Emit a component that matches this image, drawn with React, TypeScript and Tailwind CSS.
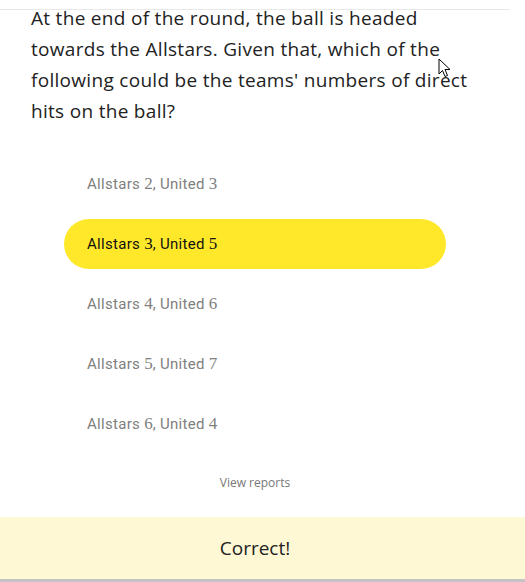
import * as React from "react"

const options = [
  { a: "2", u: "3" },
  { a: "3", u: "5", selected: true },
  { a: "4", u: "6" },
  { a: "5", u: "7" },
  { a: "6", u: "4" },
]

function Num({ children }: { children: React.ReactNode }) {
  return (
    <span className="font-['Liberation_Serif',serif] text-[17px] tracking-normal">{children}</span>
  )
}

function Cursor() {
  return (
    <svg
      className="absolute left-[438px] top-[58px]"
      width="14"
      height="20"
      viewBox="0 0 14 20"
    >
      <path
        d="M1 1 L1 16 L4.5 12.5 L7 18.5 L9.5 17.5 L7 11.5 L12 11.5 Z"
        fill="white"
        stroke="black"
        strokeWidth="1"
        strokeLinejoin="round"
      />
    </svg>
  )
}

export default function App() {
  return (
    <div className="relative flex flex-col w-[525px] h-[582px] bg-white overflow-hidden border-b-[3px] border-[#c4c4c4]">
      <div className="w-[510px] mt-[9px] border-t border-[#e8e8e8]">
        <p className="-mt-[7px] px-[31px] text-[19px] leading-[31px] tracking-[0.3px] text-[#222] font-['Open_Sans',sans-serif] whitespace-nowrap">
          At the end of the round, the ball is headed
          <br />
          towards the Allstars. Given that, which of the
          <br />
          following could be the teams' numbers of direct
          <br />
          hits on the ball?
        </p>
        <div className="flex flex-col items-center gap-[10px] mt-[32px] font-['Roboto',sans-serif]">
          {options.map((o, i) => (
            <div
              key={i}
              className={
                o.selected
                  ? "w-[382px] h-[50px] rounded-full bg-[#ffe82a] flex items-center pl-[23px] text-[15px] tracking-[0.3px] text-[#111]"
                  : "w-[382px] h-[50px] rounded-full flex items-center pl-[23px] text-[15px] tracking-[0.3px] text-[#808080]"
              }
            >
              <span>
                Allstars <Num>{o.a}</Num>, United <Num>{o.u}</Num>
              </span>
            </div>
          ))}
        </div>
        <div className="text-center text-[12px] text-[#777] mt-[25px] font-['Open_Sans',sans-serif]">
          View reports
        </div>
      </div>
      <div className="mt-auto h-[62px] bg-[#fff8d5] flex items-center">
        <span className="w-[510px] text-center text-[19px] text-[#222] font-['Open_Sans',sans-serif]">
          Correct!
        </span>
      </div>
      <Cursor />
    </div>
  )
}
